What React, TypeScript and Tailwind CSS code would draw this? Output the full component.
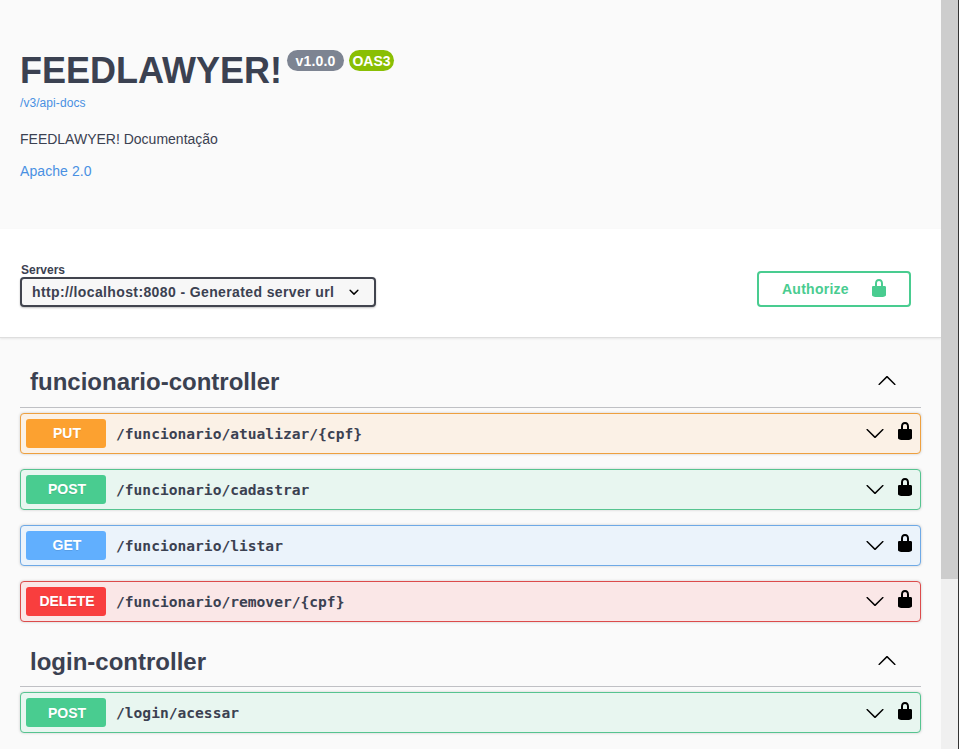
import React from "react";

const LOCK =
  "M15.8 8H14V5.6C14 2.703 12.665 1 10 1 7.334 1 6 2.703 6 5.6V8H4c-.553 0-1 .646-1 1.199V17c0 .549.428 1.139.951 1.307l1.197.387C5.672 18.861 6.55 19 7.1 19h5.8c.549 0 1.428-.139 1.951-.307l1.196-.387c.524-.167.953-.757.953-1.306V9.199C17 8.646 16.352 8 15.8 8zM12 8H8V5.199C8 3.754 8.797 3 10 3c1.203 0 2 .754 2 2.199V8z";
const UP =
  "M17.418 14.908c.272.268.709.268.979 0s.271-.701 0-.969l-7.908-7.83c-.27-.268-.707-.268-.979 0l-7.908 7.83c-.27.268-.27.701 0 .969.271.268.709.268.979 0L10 7.767l7.418 7.141z";
const DOWN =
  "M17.418 6.109c.272-.268.709-.268.979 0s.271.701 0 .969l-7.908 7.83c-.27.268-.707.268-.979 0l-7.908-7.83c-.27-.268-.27-.701 0-.969.271-.268.709-.268.979 0L10 13.25l7.418-7.141z";
const SELECT =
  "M13.418 7.859a.695.695 0 01.978 0 .68.68 0 010 .969l-3.908 3.83a.697.697 0 01-.979 0l-3.908-3.83a.68.68 0 010-.969.695.695 0 01.978 0L10 11l3.418-3.141z";

function Icon({ d, className = "" }: { d: string; className?: string }) {
  return (
    <svg viewBox="0 0 20 20" className={`size-5 shrink-0 fill-current ${className}`}>
      <path d={d} />
    </svg>
  );
}

type Method = "PUT" | "POST" | "GET" | "DELETE";

const styles: Record<Method, { row: string; badge: string }> = {
  PUT: { row: "border-[#eea03f] bg-[#fbf1e6]", badge: "bg-[#fca130]" },
  POST: { row: "border-[#56c490] bg-[#e8f6f0]", badge: "bg-[#49cc90]" },
  GET: { row: "border-[#6ea9e6] bg-[#ebf3fb]", badge: "bg-[#61affe]" },
  DELETE: { row: "border-[#dc4b4b] bg-[#fae7e7]", badge: "bg-[#f93e3e]" },
};

function Operation({ method, path, low = false }: { method: Method; path: string; low?: boolean }) {
  return (
    <div
      className={`flex h-[41px] items-start rounded border px-[5px] pt-[5px] shadow-[0_0_3px_rgba(0,0,0,0.19)] ${styles[method].row}`}
    >
      <span
        className={`h-[29px] w-20 rounded-[3px] pl-0.5 text-center text-sm font-bold text-white [text-shadow:0_1px_0_rgba(0,0,0,0.1)] ${
          low ? "leading-[31px]" : "leading-[29px]"
        } ${styles[method].badge}`}
      >
        {method}
      </span>
      <span className="mt-[5px] ml-2.5 flex-1 font-['DejaVu_Sans_Mono',monospace] text-[14.6px] leading-5 font-bold">
        {path}
      </span>
      <div className={`flex text-black ${low ? "mt-[3px]" : "mt-0.5"}`}>
        <Icon d={DOWN} className="mt-0.5" />
        <Icon d={LOCK} className="ml-2.5" />
      </div>
    </div>
  );
}

function TagHeader({ name, low = false }: { name: string; low?: boolean }) {
  return (
    <div className="flex h-[51px] items-start justify-between border-b border-[#bfc0c4] pr-6 pl-2.5">
      <h3 className={`text-2xl leading-8 font-bold ${low ? "mt-2.5" : "mt-[9px]"}`}>{name}</h3>
      <Icon d={UP} className={`text-black ${low ? "mt-3.5" : "mt-[13px]"}`} />
    </div>
  );
}

export default function App() {
  return (
    <div className="flex h-[749px] overflow-hidden bg-[#fafafa] font-['Liberation_Sans',Arial,sans-serif] text-[#3b4151]">
      <main className="flex-1">
        <header className="h-[229px] px-5 pt-[50px]">
          <div className="flex items-start">
            <h1 className="text-4xl leading-[42px] font-bold">FEEDLAWYER!</h1>
            <span className="ml-[5px] flex h-[21px] w-[57px] items-center justify-center rounded-full bg-[#7d8492] text-sm font-bold tracking-[0.2px] text-white">
              v1.0.0
            </span>
            <span className="ml-[5px] flex h-[21px] w-[45px] items-center justify-center rounded-full bg-[#89bf04] text-sm font-bold text-white">
              OAS3
            </span>
          </div>
          <a className="mt-[3px] block text-xs leading-4 tracking-[0.07px] text-[#4990e2]">/v3/api-docs</a>
          <p className="mt-5 text-sm leading-4">FEEDLAWYER! Documentação</p>
          <a className="mt-4 block text-sm leading-4 tracking-[0.08px] text-[#4990e2]">Apache 2.0</a>
        </header>

        <section className="flex h-[109px] items-start justify-between border-b border-[#dedede] bg-white pr-[30px] pl-5 shadow-[0_1px_2px_rgba(0,0,0,0.08)]">
          <div className="pt-[34px]">
            <div className="pl-px text-xs leading-[14px] font-bold">Servers</div>
            <button className="flex h-[30px] w-[356px] items-center justify-between rounded border-2 border-[#41444e] bg-[#f7f7f7] pr-2.5 pl-2.5 text-sm font-bold shadow-[0_1px_2px_rgba(0,0,0,0.25)]">
              <span className="tracking-[0.38px]">http://localhost:8080 - Generated server url</span>
              <Icon d={SELECT} className="text-black" />
            </button>
          </div>
          <button className="mt-[42px] flex h-9 w-[154px] items-center justify-between rounded border-2 border-[#49cc90] pr-5 pl-[23px] text-sm font-bold text-[#49cc90]">
            <span className="tracking-[0.25px]">Authorize</span>
            <Icon d={LOCK} className="mb-0.5" />
          </button>
        </section>

        <section className="px-5 pt-[19px]">
          <TagHeader name="funcionario-controller" />
          <div className="mt-[5px] flex flex-col gap-[15px]">
            <Operation method="PUT" path="/funcionario/atualizar/{cpf}" />
            <Operation method="POST" path="/funcionario/cadastrar" />
            <Operation method="GET" path="/funcionario/listar" />
            <Operation method="DELETE" path="/funcionario/remover/{cpf}" />
          </div>
          <div className="mt-[14px]">
            <TagHeader name="login-controller" low />
          </div>
          <div className="mt-[5px]">
            <Operation method="POST" path="/login/acessar" low />
          </div>
        </section>
      </main>
      <aside className="w-[17px] bg-[#f0f0f0]">
        <div className="h-[579px] bg-[#cdcdcd]" />
      </aside>
      <div className="w-px bg-[#333333]" />
    </div>
  );
}
